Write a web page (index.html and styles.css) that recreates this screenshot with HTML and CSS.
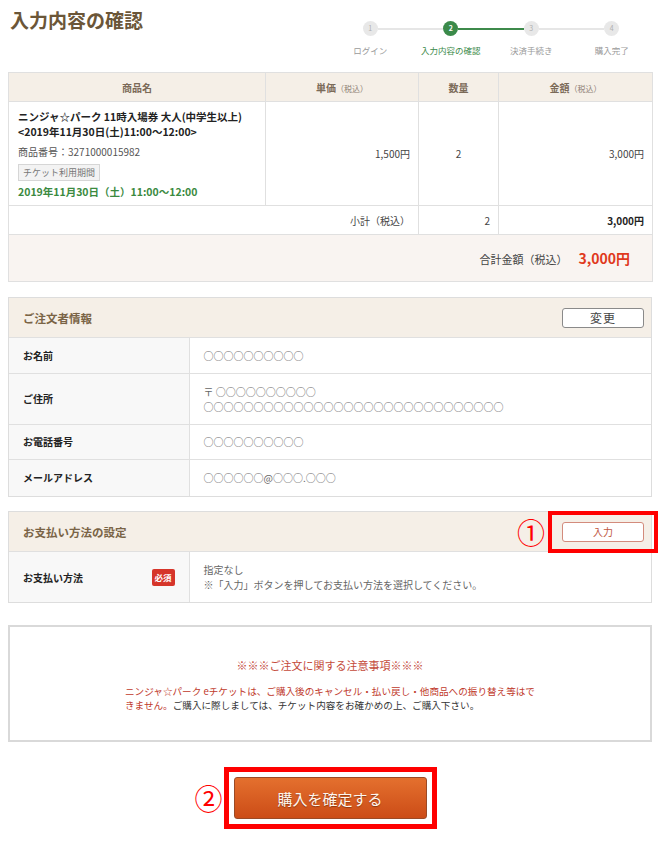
FILE: index.html
```html
<!DOCTYPE html>
<html lang="ja">
<head>
<meta charset="utf-8">
<title>入力内容の確認</title>
<link rel="stylesheet" href="styles.css">
</head>
<body>
<div class="page">
  <header class="top">
    <h1 class="title">入力内容の確認</h1>
    <ol class="stepper">
      <li class="step">
        <div class="track"><span class="seg seg-none"></span><span class="dot">1</span><span class="seg"></span></div>
        <span class="label">ログイン</span>
      </li>
      <li class="step current">
        <div class="track"><span class="seg"></span><span class="dot">2</span><span class="seg seg-on"></span></div>
        <span class="label">入力内容の確認</span>
      </li>
      <li class="step">
        <div class="track"><span class="seg seg-on"></span><span class="dot">3</span><span class="seg"></span></div>
        <span class="label">決済手続き</span>
      </li>
      <li class="step">
        <div class="track"><span class="seg"></span><span class="dot">4</span><span class="seg seg-none"></span></div>
        <span class="label">購入完了</span>
      </li>
    </ol>
  </header>

  <table class="cart">
    <colgroup><col class="c-name"><col class="c-price"><col class="c-qty"><col class="c-amt"></colgroup>
    <thead>
      <tr><th>商品名</th><th>単価<small>（税込）</small></th><th>数量</th><th>金額<small>（税込）</small></th></tr>
    </thead>
    <tbody>
      <tr class="item">
        <td class="name">
          <p class="pname">ニンジャ☆パーク 11時入場券 大人(中学生以上)<br>&lt;2019年11月30日(土)11:00〜12:00&gt;</p>
          <p class="code">商品番号：3271000015982</p>
          <span class="tag">チケット利用期間</span>
          <p class="period">2019年11月30日（土）11:00〜12:00</p>
        </td>
        <td class="num">1,500円</td>
        <td class="center">2</td>
        <td class="num">3,000円</td>
      </tr>
      <tr class="subtotal">
        <td colspan="2" class="num">小計（税込）</td>
        <td class="num">2</td>
        <td class="num strong">3,000円</td>
      </tr>
      <tr class="total">
        <td colspan="4"><span class="total-label">合計金額（税込）</span><span class="total-amt">3,000円</span></td>
      </tr>
    </tbody>
  </table>

  <section class="panel panel-orderer">
    <div class="panel-head">
      <h2>ご注文者情報</h2>
      <button class="btn-sub" type="button">変更</button>
    </div>
    <table class="info">
      <tr class="r36"><th>お名前</th><td>○○○○○○○○○○</td></tr>
      <tr class="r51"><th>ご住所</th><td>〒 ○○○○○○○○○○<br>○○○○○○○○○○○○○○○○○○○○○○○○○○○○○○</td></tr>
      <tr class="r36"><th>お電話番号</th><td>○○○○○○○○○○</td></tr>
      <tr class="r37"><th>メールアドレス</th><td>○○○○○○@○○○.○○○</td></tr>
    </table>
  </section>

  <section class="panel panel-pay">
    <div class="panel-head">
      <h2>お支払い方法の設定</h2>
      <span class="mark">
        <span class="mark-num">①</span>
        <button class="btn-input" type="button">入力</button>
        <span class="mark-box"></span>
      </span>
    </div>
    <table class="info">
      <tr class="r50">
        <th><div class="th-flex"><span>お支払い方法</span><span class="badge">必須</span></div></th>
        <td class="pay-val">指定なし<br>※「入力」ボタンを押してお支払い方法を選択してください。</td>
      </tr>
    </table>
  </section>

  <div class="notice">
    <p class="notice-title">※※※ご注文に関する注意事項※※※</p>
    <p class="notice-body"><span class="warn">ニンジャ☆パーク eチケットは、ご購入後のキャンセル・払い戻し・他商品への振り替え等はで<br>きません。</span>ご購入に際しましては、チケット内容をお確かめの上、ご購入下さい。</p>
  </div>

  <div class="confirm">
    <span class="mark2">
      <span class="mark2-num">②</span>
      <button class="btn-confirm" type="button">購入を確定する</button>
    </span>
  </div>
</div>
</body>
</html>
```

FILE: styles.css
```css
* { box-sizing: border-box; }
html, body { margin: 0; padding: 0; background: #fff; }
body {
  font-family: "Noto Sans CJK JP", "Noto Sans", sans-serif;
  color: #333;
  font-size: 10px;
}
p { margin: 0; }
.page { width: 660px; padding: 0 8px; }

/* header */
.top { display: flex; justify-content: space-between; align-items: flex-start; height: 72px; }
.title { margin: 7px 0 0 2px; font-size: 19px; line-height: 26px; font-weight: 700; color: #6b5638; }
.stepper { list-style: none; margin: 21px 0 0; padding: 0; display: flex; width: 322px; }
.step { flex: 1; display: flex; flex-direction: column; }
.track { display: flex; align-items: center; height: 15px; }
.seg { flex: 1; height: 2px; background: #e6e6e6; }
.seg-none { background: transparent; }
.seg-on { background: #3d8a4b; }
.dot {
  width: 15px; height: 15px; border-radius: 50%;
  background: #e8e8e8; color: #b0b0b0;
  font-size: 7px; line-height: 15px; text-align: center;
}
.current .dot { background: #3b8a4a; color: #fff; font-weight: 700; }
.label { margin-top: 8px; text-align: center; font-size: 8.5px; line-height: 12px; color: #9a9a9a; }
.current .label { color: #3b8a4a; }

/* cart table */
.cart { width: 100%; border-collapse: collapse; table-layout: fixed; border: 1px solid #ddd; }
.c-name { width: 257px; }
.c-price { width: 153px; }
.c-qty { width: 80px; }
.c-amt { width: 154px; }
.cart th, .cart td { border: 1px solid #e0e0e0; padding: 0 8px; }
.cart thead th {
  height: 29px; background: #f5efe7; color: #7b6a58;
  font-size: 10px; font-weight: 700; text-align: center;
}
.cart thead small { font-size: 8px; font-weight: 400; color: #8d8074; }
.item td { height: 103px; vertical-align: middle; font-size: 10px; color: #444; }
.item .name { padding: 7px 9px 6px; vertical-align: top; }
.pname { font-size: 10.5px; font-weight: 700; line-height: 15px; color: #222; }
.code { margin-top: 6px; font-size: 10px; line-height: 14px; color: #555; }
.tag {
  display: inline-block; margin-top: 5px; padding: 0 4px;
  height: 17px; line-height: 15px;
  border: 1px solid #d6d6d6; background: #f3f3f3;
  font-size: 9px; color: #777;
}
.period { margin-top: 3px; font-size: 10.5px; font-weight: 700; line-height: 15px; color: #3b8a3f; }
.num { text-align: right; }
.center { text-align: center; }
.subtotal td { height: 29px; font-size: 10px; color: #444; }
.subtotal .strong { font-weight: 700; color: #222; }
.total td {
  height: 47px; background: #f9f4f1; text-align: right; padding-right: 22px;
}
.total-label { font-size: 11px; color: #444; }
.total-amt { margin-left: 11px; font-size: 14px; font-weight: 700; color: #e0391d; }

/* panels */
.panel { border: 1px solid #ddd; }
.panel-orderer { margin-top: 15px; }
.panel-pay { margin-top: 14px; }
.panel-head {
  display: flex; align-items: center; justify-content: space-between;
  height: 40px; padding: 0 7px 0 14px;
  background: #f5efe7; border-bottom: 1px solid #e0e0e0;
}
.panel-head h2 { margin: 0; font-size: 11.5px; font-weight: 700; color: #7a6446; }
.btn-sub {
  width: 82px; height: 20px; padding: 0;
  border: 1px solid #8a8a8a; border-radius: 3px; background: #fff;
  font-family: inherit; font-size: 12px; color: #444; letter-spacing: 1px;
}
.info { width: 100%; border-collapse: collapse; }
.info th {
  width: 180px; background: #f8f8f8; text-align: left; font-weight: 700;
  padding: 0 14px; border-right: 1px solid #e0e0e0;
  font-size: 10px; color: #222;
}
.info td { padding: 0 14px; color: #666; font-size: 10px; line-height: 15px; }
.info tr + tr > * { border-top: 1px solid #e0e0e0; }
.r36 > * { height: 35px; }
.r37 > * { height: 37px; }
.r51 > * { height: 51px; }
.r50 > * { height: 50px; }
.th-flex { display: flex; align-items: center; justify-content: space-between; }
.badge {
  display: inline-block; width: 23px; height: 17px; line-height: 17px;
  background: #d6352a; color: #fff; border-radius: 2px;
  font-size: 8.5px; font-weight: 700; text-align: center;
}
.pay-val { color: #444; }

/* annotation 1 */
.mark { position: relative; display: inline-block; }
.btn-input {
  display: block; width: 82px; height: 20px; padding: 0;
  border: 1px solid #d38b7c; border-radius: 3px; background: #fff;
  font-family: inherit; font-size: 10px; color: #c0563e;
}
.mark-box {
  position: absolute; top: -11px; bottom: -11px; left: -14px; right: -14px;
  border: 4px solid #ff0000;
}
.mark-num {
  position: absolute; right: calc(100% + 17px); top: 50%;
  transform: translateY(-50%);
  font-size: 28px; line-height: 30px; color: #ff0000;
}

/* notice */
.notice {
  margin-top: 22px; border: 2px solid #d9d9d9;
  padding: 31px 0 28px; text-align: center;
}
.notice-title { font-size: 11px; line-height: 15px; color: #c44a3a; }
.notice-body {
  width: fit-content; margin: 11px auto 0; text-align: left;
  font-size: 9.6px; line-height: 14px; color: #333;
}
.warn { color: #c0392b; }

/* confirm */
.confirm { margin-top: 25px; text-align: center; }
.mark2 {
  position: relative; display: inline-block;
  border: 5px solid #ff0000; padding: 5px;
}
.mark2-num {
  position: absolute; right: calc(100% + 6px); top: 50%;
  transform: translateY(-50%);
  font-size: 28px; line-height: 30px; color: #ff0000;
}
.btn-confirm {
  display: block; width: 193px; height: 42px; padding: 0;
  border: 1px solid #9b4a26; border-radius: 3px;
  background: linear-gradient(#e4702e, #cc4c17);
  font-family: inherit; font-size: 15px; color: #fff6ee;
  text-shadow: 0 1px 1px rgba(0,0,0,0.35);
}
```
